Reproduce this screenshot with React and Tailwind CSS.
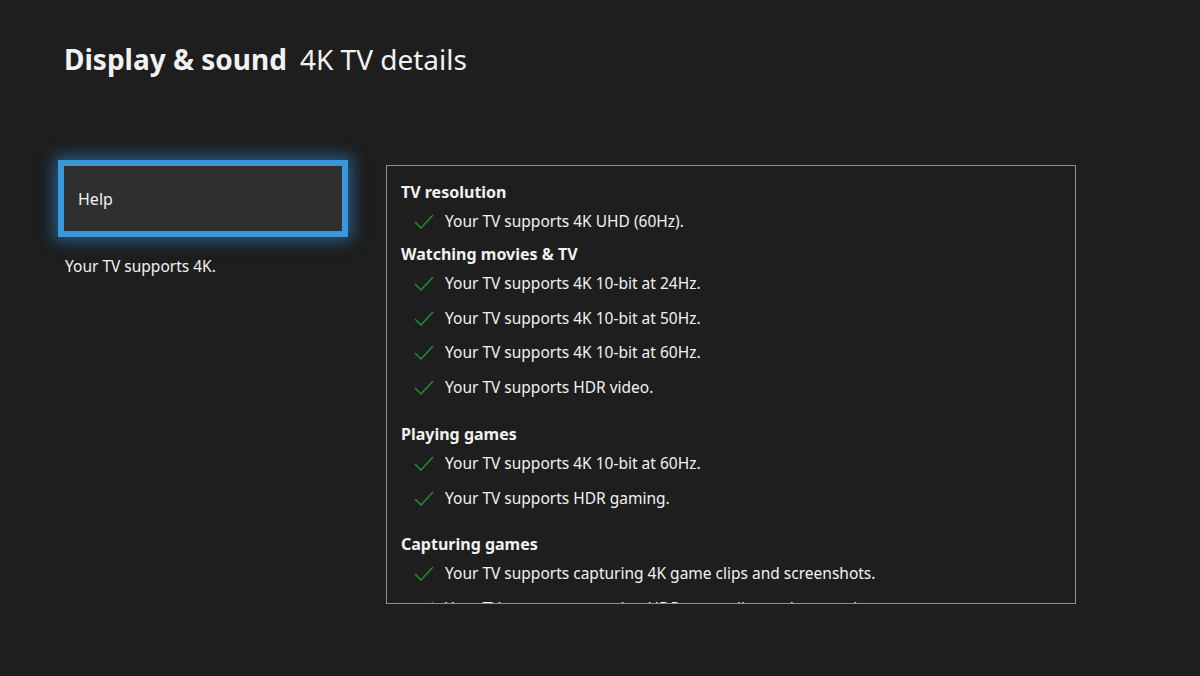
const sections = [
  { title: 'TV resolution', mt: 'mt-0', items: ['Your TV supports 4K UHD (60Hz).'] },
  {
    title: 'Watching movies & TV',
    mt: 'mt-[3.5px]',
    items: [
      'Your TV supports 4K 10-bit at 24Hz.',
      'Your TV supports 4K 10-bit at 50Hz.',
      'Your TV supports 4K 10-bit at 60Hz.',
      'Your TV supports HDR video.',
    ],
  },
  {
    title: 'Playing games',
    mt: 'mt-[17.5px]',
    items: ['Your TV supports 4K 10-bit at 60Hz.', 'Your TV supports HDR gaming.'],
  },
  {
    title: 'Capturing games',
    mt: 'mt-[16.5px]',
    items: [
      'Your TV supports capturing 4K game clips and screenshots.',
      'Your TV supports capturing HDR game clips and screenshots.',
    ],
  },
]

const Check = () => (
  <svg width="20" height="15" viewBox="0 0 20 15" className="shrink-0">
    <path d="M1 8 L7 14 L19 1" fill="none" stroke="#1f8b2c" strokeWidth="1.6" />
  </svg>
)

const App = () => {
  return (
    <div
      className="w-[1200px] h-[676px] bg-[#1e1e1e] text-[#f2f2f2] overflow-hidden"
      style={{ fontFamily: '"Noto Sans", "Open Sans", sans-serif' }}
    >
      {/* Header */}
      <div className="pt-[41px] pl-[64px] flex items-baseline gap-[13px] h-[160px]">
        <h1 className="text-[28px] font-bold leading-[36px]">Display &amp; sound</h1>
        <span className="text-[28px] leading-[36px] font-normal">4K TV details</span>
      </div>

      <div className="flex pl-[58px]">
        {/* Left column */}
        <div className="w-[290px] shrink-0">
          <div className="h-[77px] border-[6px] border-[#3b97dc] bg-[#2f2f2f] shadow-[0_0_14px_4px_rgba(40,140,220,0.55)] flex items-center pl-[14px]">
            <span className="text-[16px]">Help</span>
          </div>
          <p className="mt-[17px] pl-[7px] text-[15.5px] leading-[24px]">Your TV supports 4K.</p>
        </div>

        {/* Details box */}
        <div className="ml-[38px] mt-[5px] w-[690px] h-[439px] border border-[#8f8f8f] overflow-hidden pt-[14px] pl-[14px]">
          {sections.map((s) => (
            <div key={s.title} className={s.mt}>
              <div className="h-[24px] flex items-center text-[16px] font-bold">{s.title}</div>
              {s.items.map((item, i) => (
                <div key={i} className="h-[34.7px] flex items-center gap-[11px] pl-[13px] text-[15.5px]">
                  <Check />
                  <span>{item}</span>
                </div>
              ))}
            </div>
          ))}
        </div>
      </div>
    </div>
  )
}

export default App
